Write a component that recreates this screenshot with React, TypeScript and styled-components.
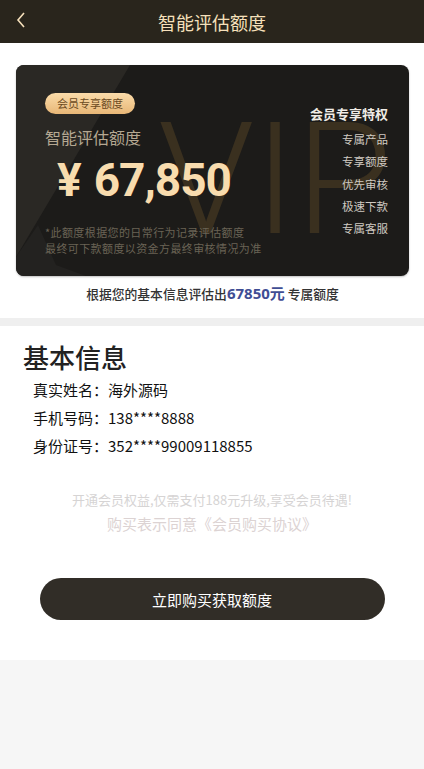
import React from 'react';
import styled, { createGlobalStyle } from 'styled-components';

const GlobalStyle = createGlobalStyle`
  html, body {
    margin: 0;
    padding: 0;
    background: #f6f6f6;
    font-family: "Noto Sans CJK SC", "Noto Sans", sans-serif;
  }
`;

const perks = ['专属产品', '专享额度', '优先审核', '极速下款', '专属客服'];

const infoRows = [
  { label: '真实姓名：', value: '海外源码' },
  { label: '手机号码：', value: '138****8888' },
  { label: '身份证号：', value: '352****99009118855' },
];

export default function App() {
  return (
    <Page>
      <GlobalStyle />
      <Header>
        <BackBtn aria-label="back">
          <svg width="12" height="18" viewBox="0 0 12 18">
            <path d="M9 2 L3 9 L9 16" fill="none" stroke="#f6e0bb" strokeWidth="1.6" />
          </svg>
        </BackBtn>
        <Title>智能评估额度</Title>
      </Header>

      <TopSection>
        <Card>
          <CardDeco viewBox="0 0 393 211" preserveAspectRatio="none">
            <polygon points="0,0 114,0 0,192" fill="#2a2824" />
            <polygon points="0,211 0,192 22,160 40,200 70,211" fill="#232220" />
          </CardDeco>
          <Watermark>VIP</Watermark>
          <CardLeft>
            <Badge>会员专享额度</Badge>
            <CardTitle>智能评估额度</CardTitle>
            <Amount>
              <span>¥</span>67,850
            </Amount>
            <Note>
              *此额度根据您的日常行为记录评估额度
              <br />
              最终可下款额度以资金方最终审核情况为准
            </Note>
          </CardLeft>
          <CardRight>
            <PerkTitle>会员专享特权</PerkTitle>
            {perks.map((p) => (
              <Perk key={p}>{p}</Perk>
            ))}
          </CardRight>
        </Card>
        <Summary>
          根据您的基本信息评估出<Highlight>67850元</Highlight> 专属额度
        </Summary>
      </TopSection>

      <InfoSection>
        <SectionTitle>基本信息</SectionTitle>
        <InfoList>
          {infoRows.map((r) => (
            <InfoRow key={r.label}>
              {r.label}
              {r.value}
            </InfoRow>
          ))}
        </InfoList>
        <Promo>
          <PromoLine>开通会员权益,仅需支付188元升级,享受会员待遇!</PromoLine>
          <PromoLine $big>购买表示同意《会员购买协议》</PromoLine>
        </Promo>
        <BuyButton>立即购买获取额度</BuyButton>
      </InfoSection>
    </Page>
  );
}

const Page = styled.div`
  min-height: 769px;
  background: #f6f6f6;
`;

const Header = styled.header`
  height: 43px;
  background: #29251c;
  display: flex;
  align-items: center;
  justify-content: center;
  position: relative;
`;

const BackBtn = styled.div`
  position: absolute;
  left: 15px;
  top: 11px;
  display: flex;
`;

const Title = styled.h1`
  margin: 0;
  font-size: 18px;
  font-weight: 400;
  color: #f6e0bb;
`;

const TopSection = styled.section`
  background: #fff;
  padding: 22px 15px 0 16px;
  height: 253px;
  border-bottom: 8px solid #efefef;
`;

const Card = styled.div`
  position: relative;
  overflow: hidden;
  height: 211px;
  border-radius: 8px;
  background: #1c1b19;
  display: flex;
  justify-content: space-between;
  box-shadow: 0 1px 2px rgba(0, 0, 0, 0.25);
`;

const CardDeco = styled.svg`
  position: absolute;
  inset: 0;
  width: 100%;
  height: 100%;
`;

const Watermark = styled.div`
  position: absolute;
  left: 142px;
  top: 37px;
  font-family: Roboto, "Liberation Sans", sans-serif;
  font-weight: 300;
  font-size: 156px;
  color: #3a301f;
  line-height: 1;
`;

const CardLeft = styled.div`
  position: relative;
  padding: 28px 0 0 29px;
  display: flex;
  flex-direction: column;
  align-items: flex-start;
`;

const Badge = styled.div`
  height: 21px;
  padding: 0 12px;
  border-radius: 11px;
  background: linear-gradient(180deg, #fbdcaa, #e8b777);
  color: #6b4a22;
  font-size: 11px;
  line-height: 21px;
`;

const CardTitle = styled.div`
  margin-top: 12px;
  font-size: 16px;
  line-height: 22px;
  color: #b5a892;
`;

const Amount = styled.div`
  margin: 7px 0 0 12px;
  font-family: Roboto, "Liberation Sans", sans-serif;
  font-weight: 700;
  font-size: 46px;
  line-height: 50px;
  color: #f8dcae;
  letter-spacing: -1px;

  & span {
    margin-right: 13px;
  }
`;

const Note = styled.div`
  margin-top: 19px;
  font-size: 11px;
  letter-spacing: 0.4px;
  line-height: 16px;
  color: #6a6355;
`;

const CardRight = styled.div`
  position: relative;
  padding: 40px 21px 0 0;
  display: flex;
  flex-direction: column;
  align-items: flex-end;
`;

const PerkTitle = styled.div`
  font-size: 13px;
  font-weight: 700;
  line-height: 18px;
  color: #f0ece6;
  margin-bottom: 5px;
`;

const Perk = styled.div`
  font-size: 11.5px;
  line-height: 22.25px;
  color: #cfcac2;
`;

const Summary = styled.div`
  margin-top: 8px;
  text-align: center;
  font-size: 12.8px;
  font-weight: 500;
  color: #333;
  line-height: 18px;
`;

const Highlight = styled.span`
  font-family: "Noto Sans", "Noto Sans CJK SC", sans-serif;
  font-size: 15px;
  font-weight: 700;
  color: #3f4d94;
`;

const InfoSection = styled.section`
  background: #fff;
  padding: 14px 0 40px;
`;

const SectionTitle = styled.h2`
  margin: 0 0 0 23px;
  font-size: 26px;
  font-weight: 500;
  line-height: 34px;
  color: #222;
`;

const InfoList = styled.div`
  margin: 2px 0 0 33px;
`;

const InfoRow = styled.div`
  font-size: 15px;
  line-height: 28px;
  color: #111;
`;

const Promo = styled.div`
  margin-top: 28px;
  text-align: center;
`;

const PromoLine = styled.p<{ $big?: boolean }>`
  margin: 0;
  font-size: ${(p) => (p.$big ? '15px' : '13px')};
  line-height: 24px;
  color: ${(p) => (p.$big ? '#dcd3d3' : '#d6d4d4')};
`;

const BuyButton = styled.button`
  display: block;
  width: 345px;
  height: 42px;
  margin: 42px auto 0;
  border: none;
  border-radius: 21px;
  background: #312d27;
  color: #fff;
  font-family: "Noto Sans CJK SC", sans-serif;
  font-size: 15px;
`;
